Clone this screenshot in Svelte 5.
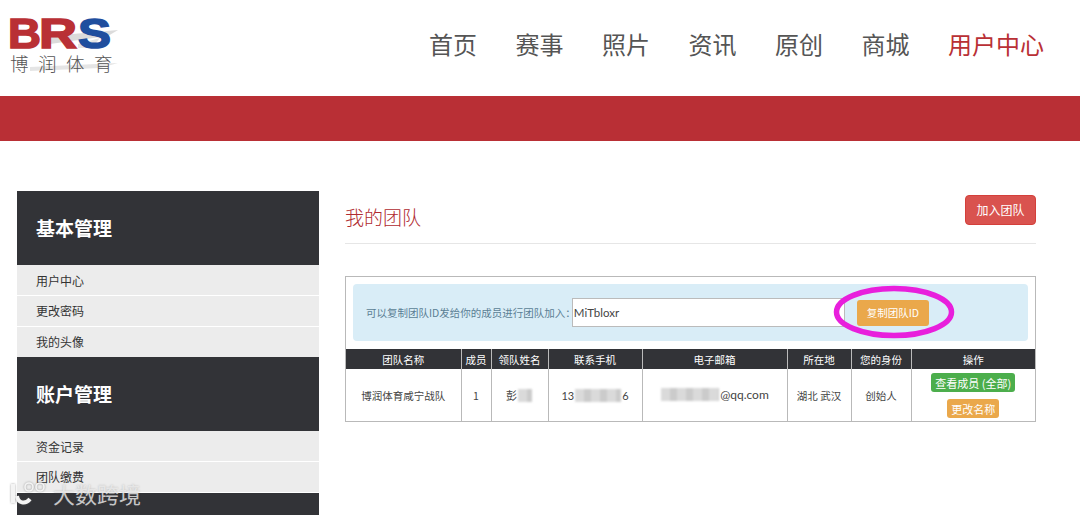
<script lang="ts">
  const nav = ['首页', '赛事', '照片', '资讯', '原创', '商城', '用户中心'];
  const groups = [
    { title: '基本管理', items: ['用户中心', '更改密码', '我的头像'] },
    { title: '账户管理', items: ['资金记录', '团队缴费'] },
  ];
  const columns = [
    { label: '团队名称', width: 115 },
    { label: '成员', width: 30 },
    { label: '领队姓名', width: 57 },
    { label: '联系手机', width: 94 },
    { label: '电子邮箱', width: 145 },
    { label: '所在地', width: 64 },
    { label: '您的身份', width: 60 },
    { label: '操作', width: 124 },
  ];
</script>

<header class="top">
  <svg class="logo" width="130" height="80" viewBox="0 0 130 80">
    <path d="M50 36 L118 30 L108 36 L50 44 Z" fill="#cfcfcf" opacity="0.75" />
    <path d="M78 44 L100 38 L92 48 L78 48 Z" fill="#d8d8d8" opacity="0.7" />
    <path d="M30 67 L118 63 L100 68 L30 71 Z" fill="#dcdcdc" opacity="0.75" />
    <text x="8" y="48" class="brs" fill="#b93035" stroke="#b93035" textLength="33" lengthAdjust="spacingAndGlyphs">B</text>
    <text x="39" y="48" class="brs" fill="#b93035" stroke="#b93035" textLength="38" lengthAdjust="spacingAndGlyphs">R</text>
    <text x="78" y="48" class="brs" fill="#1f4e9e" stroke="#1f4e9e" textLength="33" lengthAdjust="spacingAndGlyphs">S</text>
    <text x="10" y="71" class="cn" fill="#555">博润体育</text>
  </svg>
  <nav class="nav">
    {#each nav as item}
      <span class:active={item === '用户中心'}>{item}</span>
    {/each}
  </nav>
</header>
<div class="band"></div>

<div class="page">
  <aside class="side">
    {#each groups as group}
      <h2>{group.title}</h2>
      <ul>
        {#each group.items as item}
          <li>{item}</li>
        {/each}
      </ul>
    {/each}
    <div class="next"></div>
  </aside>

  <main class="main">
    <div class="title">
      <h1>我的团队</h1>
      <button class="btn red">加入团队</button>
    </div>

    <section class="panel">
      <div class="notice">
        <label for="team-id">可以复制团队ID发给你的成员进行团队加入：</label>
        <input id="team-id" value="MiTbloxr" readonly />
        <span class="copy">
          <button class="btn orange big">复制团队ID</button>
          <svg class="ring" width="124" height="56" viewBox="0 0 124 56">
            <ellipse cx="62" cy="28" rx="57.5" ry="23.5" fill="none" stroke="#e81fdc" stroke-width="5.5" />
          </svg>
        </span>
      </div>
      <table>
        <colgroup>
          {#each columns as col}
            <col style="width: {col.width}px" />
          {/each}
        </colgroup>
        <thead>
          <tr>
            {#each columns as col}
              <th>{col.label}</th>
            {/each}
          </tr>
        </thead>
        <tbody>
          <tr>
            <td>博润体育咸宁战队</td>
            <td>1</td>
            <td><span class="mask">彭<i class="blur" style="width: 14px"></i></span></td>
            <td><span class="mask">13<i class="blur" style="width: 46px"></i>6</span></td>
            <td><span class="mask email"><i class="blur" style="width: 58px"></i>@qq.com</span></td>
            <td>湖北 武汉</td>
            <td>创始人</td>
            <td class="ops">
              <button class="btn green">查看成员 (全部)</button>
              <button class="btn orange">更改名称</button>
            </td>
          </tr>
        </tbody>
      </table>
    </section>
  </main>
</div>

<div class="mark">
  <svg width="36" height="26" viewBox="0 0 36 26">
    <path d="M4 3 V22 M21 18 C16 24 9 22 8 15" fill="none" stroke="#f4f4f4" stroke-width="4" />
    <circle cx="20" cy="6" r="4" fill="none" stroke="#f4f4f4" stroke-width="1.6" />
    <circle cx="31" cy="6" r="4" fill="none" stroke="#f4f4f4" stroke-width="1.6" />
  </svg>
  <span>大数跨境</span>
</div>

<style>
  :global(body) {
    margin: 0;
    height: 515px;
    overflow: hidden;
    background: #fff;
    font-family: "Noto Sans CJK SC", "Noto Sans", sans-serif;
    color: #333;
  }
  .top {
    height: 96px;
    display: flex;
    justify-content: space-between;
    align-items: flex-start;
    background: #fff;
  }
  .logo { display: block; }
  .brs {
    font-family: "Liberation Sans", sans-serif;
    font-weight: 700;
    font-size: 43px;
    stroke-width: 1.6px;
  }
  .cn {
    font-family: "Noto Sans CJK SC", sans-serif;
    font-size: 18.5px;
    font-weight: 300;
    letter-spacing: 9.5px;
  }
  .nav {
    display: flex;
    gap: 38.5px;
    padding: 26px 36px 0 0;
    font-size: 24px;
    line-height: 36px;
    color: #555;
  }
  .nav .active { color: #b93035; }
  .band { height: 45px; background: #b92f35; }

  .page {
    display: flex;
    gap: 26px;
    padding: 50px 44px 0 17px;
    height: 374px;
    box-sizing: border-box;
    overflow: hidden;
  }
  .side { width: 302px; flex: none; }
  .side h2 {
    margin: 0;
    height: 74px;
    padding-left: 19px;
    background: #323337;
    color: #fff;
    font-size: 19px;
    font-weight: 700;
    line-height: 74px;
  }
  .side ul {
    margin: 0;
    padding: 0;
    list-style: none;
  }
  .side li {
    height: 30px;
    margin-top: 1px;
    padding-left: 19px;
    background: #ececec;
    font-size: 12px;
    line-height: 29px;
    color: #333;
  }
  .side li:first-child { margin-top: 0; padding-top: 1px; height: 29px; }
  .next {
    height: 60px;
    margin-top: 1px;
    background: #323337;
  }

  .main { flex: 1; min-width: 0; }
  .title {
    height: 52px;
    display: flex;
    justify-content: space-between;
    align-items: flex-start;
    border-bottom: 1px solid #e6e6e6;
  }
  .title h1 {
    margin: 13px 0 0;
    font-size: 19px;
    font-weight: 300;
    line-height: 26px;
    color: #b02a30;
  }
  .btn {
    border: 1px solid transparent;
    border-radius: 3px;
    font-family: inherit;
    font-size: 11px;
    line-height: 16px;
    color: #fff;
    padding: 1px 3px;
  }
  .red {
    margin-top: 4px;
    width: 71px;
    height: 30px;
    padding: 0;
    font-size: 12px;
    border-radius: 4px;
    background: #d9534f;
    border-color: #d43f3a;
  }
  .orange { background: #eaa84b; }
  .green { background: #4cae4c; }
  .big { width: 72px; height: 26px; font-size: 10.5px; padding: 0; }

  .panel {
    margin-top: 32px;
    border: 1px solid #b9b9b9;
    height: 146px;
    box-sizing: border-box;
    padding: 7px 0 0;
  }
  .notice {
    margin: 0 7px;
    height: 57px;
    box-sizing: border-box;
    padding-left: 13px;
    display: flex;
    align-items: center;
    background: #d9edf7;
    border-radius: 4px;
    font-size: 10.5px;
    color: #5b7f95;
  }
  .notice label { white-space: nowrap; }
  .notice input {
    width: 273px;
    height: 29px;
    box-sizing: border-box;
    margin: 0 0 0 -4px;
    padding: 0 1px;
    border: 1px solid #bbb;
    border-radius: 0;
    background: #fff;
    font-family: "Lato", sans-serif;
    font-size: 11.5px;
    color: #444;
    outline: none;
  }
  .copy {
    position: relative;
    margin-left: 12px;
    display: inline-flex;
  }
  .ring {
    position: absolute;
    left: -25px;
    top: -16px;
    pointer-events: none;
  }

  table {
    margin-top: 8px;
    width: 689px;
    table-layout: fixed;
    border-collapse: collapse;
    font-size: 10.5px;
  }
  th {
    height: 20px;
    padding: 0;
    background: #323337;
    color: #fff;
    font-weight: 400;
    border-left: 1px solid #bbb;
  }
  th:first-child, td:first-child { border-left: 0; }
  td {
    height: 52px;
    box-sizing: border-box;
    padding: 0;
    text-align: center;
    border-left: 1px solid #b9b9b9;
    color: #444;
  }
  .ops { padding: 4px 0 0; vertical-align: top; }
  .ops .btn {
    display: block;
    margin: 0 auto;
    height: 19px;
    padding: 0 3px;
    font-size: 11px;
    line-height: 16px;
  }
  .ops .btn + .btn { margin-top: 7px; }
  .mask {
    display: inline-flex;
    align-items: center;
    font-family: "Lato", "Noto Sans CJK SC", sans-serif;
    font-size: 11px;
  }
  .email { font-size: 12px; }
  .blur {
    display: inline-block;
    height: 13px;
    background: repeating-linear-gradient(90deg, #dadada 0 9px, #cbcbcb 9px 16px);
    filter: blur(1px);
    margin: 0 1px;
  }
  .mark {
    position: absolute;
    left: 9px;
    top: 480px;
    display: flex;
    align-items: center;
    gap: 8px;
    color: rgba(238, 238, 238, 0.8);
    font-size: 22px;
    line-height: 27px;
    text-shadow: 0 0 2px rgba(90, 90, 90, 0.35);
  }
  .mark svg { filter: drop-shadow(0 0 1px rgba(90, 90, 90, 0.55)); }
</style>
